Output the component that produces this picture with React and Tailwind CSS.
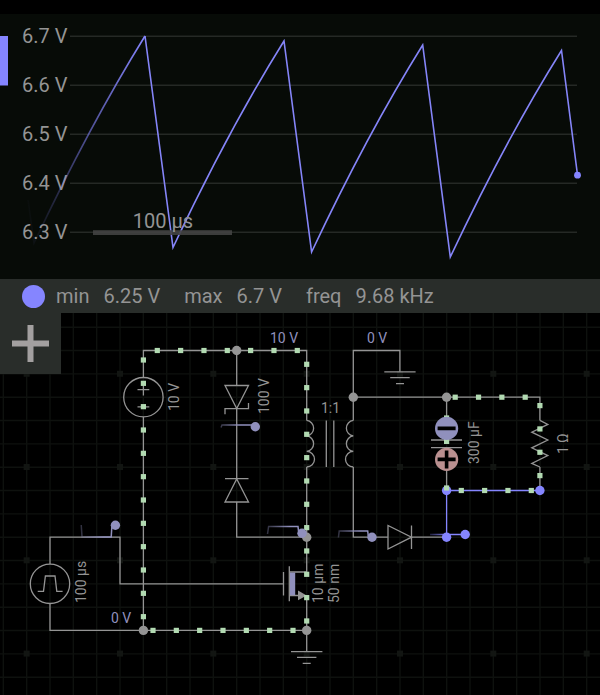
import React from "react";

const GRID = 70 / 3;
const COLS = Array.from({ length: 26 }, (_, i) => 10 / 3 + i * GRID);
const ROWS = Array.from({ length: 16 }, (_, i) => 327.2 + i * GRID);
const MARK_X = [80 / 3, 120, 213.3, 306.7, 400, 493.3, 586.7];
const MARK_Y = [373.8, 467, 560.3, 653.6];

const Y_TICKS = [
  { label: "6.7 V", y: 36 },
  { label: "6.6 V", y: 85 },
  { label: "6.5 V", y: 134 },
  { label: "6.4 V", y: 183 },
  { label: "6.3 V", y: 232 },
];

const run = (start, count) => Array.from({ length: count }, (_, i) => start + i * GRID);

const CHARGES = [
  ...run(157.3, 7).map((x) => [x, 350.5]),
  ...run(360, 12).map((y) => [143.4, y]),
  ...run(153, 7).map((x) => [x, 630.4]),
  ...run(364.3, 12).map((y) => [306.7, y]),
  ...run(455.2, 4).map((x) => [x, 397.2]),
  ...run(405.6, 4).map((y) => [539.9, y]),
  ...run(461.3, 4).map((x) => [x, 490.5]),
  [446.6, 418],
  [446.6, 441.4],
  [446.6, 488],
];

const NODES = [
  [236.7, 350.5],
  [353.3, 397.2],
  [446.6, 397.2],
  [306.7, 537.2],
  [143.4, 630.4],
  [306.7, 630.4],
];

const STATS = [
  { name: "min", value: "6.25 V" },
  { name: "max", value: "6.7 V" },
  { name: "freq", value: "9.68 kHz" },
];

function Scope() {
  return (
    <svg viewBox="0 14 600 265" className="block h-auto w-full bg-[#070b07]" role="img" aria-label="Voltage over time">
      <defs>
        <linearGradient id="fade" gradientUnits="userSpaceOnUse" x1="28" y1="0" x2="145" y2="0">
          <stop offset="0" stopColor="#8585ff" stopOpacity="0.02" />
          <stop offset="0.1" stopColor="#8585ff" stopOpacity="0.08" />
          <stop offset="0.5" stopColor="#8585ff" stopOpacity="0.55" />
          <stop offset="1" stopColor="#8585ff" />
        </linearGradient>
      </defs>
      <rect x="0" y="36" width="8" height="49.5" fill="#8585ff" />
      {Y_TICKS.map((t) => (
        <g key={t.label}>
          <line x1="70" x2="577" y1={t.y + 0.3} y2={t.y + 0.3} stroke="#252925" strokeWidth="1.4" />
          <text x="22" y={t.y + 7} fontSize="20" fill="#949494">{t.label}</text>
        </g>
      ))}
      <g fill="none" strokeWidth="1.6" strokeLinejoin="miter">
        <path d="M28 200 L34 243 Q89.5 125.5 145 36" stroke="url(#fade)" />
        <path
          d="M145 36 L173 247.5 Q228.5 130 284 41 L311.6 252 Q367 134.5 422.7 45 L450.3 257 Q505.8 139.5 561.5 50.5 L577.5 175"
          stroke="#8585f8"
        />
      </g>
      <rect x="93" y="230.2" width="139" height="4.8" fill="#434343" fillOpacity="0.9" />
      <text x="163" y="228" fontSize="20" textAnchor="middle" fill="#949494">100 µs</text>
      <circle cx="577.5" cy="175.2" r="3.4" fill="#8585ff" />
    </svg>
  );
}

function Label({ x, y, children }) {
  return (
    <text transform={`translate(${x} ${y}) rotate(-90)`} fontSize="14" fill="#949494">
      {children}
    </text>
  );
}

function Schematic() {
  return (
    <svg viewBox="0 313 600 382" className="block h-auto w-full bg-black" role="img" aria-label="Flyback converter circuit">
      <defs>
        <linearGradient id="probeA" gradientUnits="userSpaceOnUse" x1="220" y1="0" x2="240" y2="0">
          <stop offset="0" stopColor="#9090bd" stopOpacity="0.35" />
          <stop offset="1" stopColor="#9090bd" />
        </linearGradient>
        <linearGradient id="probeB" gradientUnits="userSpaceOnUse" x1="266" y1="0" x2="290" y2="0">
          <stop offset="0" stopColor="#9090bd" stopOpacity="0.3" />
          <stop offset="1" stopColor="#9090bd" />
        </linearGradient>
        <linearGradient id="probeC" gradientUnits="userSpaceOnUse" x1="337" y1="0" x2="360" y2="0">
          <stop offset="0" stopColor="#9090bd" stopOpacity="0.3" />
          <stop offset="1" stopColor="#9090bd" />
        </linearGradient>
        <linearGradient id="probeD" gradientUnits="userSpaceOnUse" x1="80" y1="0" x2="104" y2="0">
          <stop offset="0" stopColor="#9090bd" stopOpacity="0.3" />
          <stop offset="1" stopColor="#9090bd" />
        </linearGradient>
        <linearGradient id="probeE" gradientUnits="userSpaceOnUse" x1="429" y1="0" x2="448" y2="0">
          <stop offset="0" stopColor="#8585ff" stopOpacity="0.2" />
          <stop offset="1" stopColor="#8585ff" />
        </linearGradient>
      </defs>

      {/* background grid */}
      <g stroke="#0e110e" strokeWidth="1.4">
        {COLS.map((x) => (
          <line key={x} x1={x} x2={x} y1="313" y2="695" />
        ))}
        {ROWS.map((y) => (
          <line key={y} x1="0" x2="600" y1={y} y2={y} />
        ))}
      </g>
      <g fill="#121512">
        {MARK_Y.map((y) => MARK_X.map((x) => <rect key={`${x}-${y}`} x={x - 3} y={y - 3} width="6" height="6" />))}
      </g>

      {/* wires and component outlines */}
      <g fill="none" stroke="#949494" strokeWidth="1.3">
        <path d="M143.4 377.5 V350.5 H306.7 V420.4" />
        <path d="M143.4 417 V630.4" />
        <path d="M50 603.5 V630.4 H306.7" />
        <path d="M50 564 V537.2 H120 V583.8 H283.5" />
        <path d="M236.7 350.5 V385.5 M236.7 408.8 V479 M236.7 502 V537.2 H306.7" />
        <path d="M306.7 467 V572 H289.3 M289.3 595.5 H300 M306.7 595.5 V651.6" />
        <path d="M353.3 420.4 V350.5 H399.9 V371.8" />
        <path d="M353.3 397.2 H539.9 V420.4 M539.9 467 V490.5" />
        <path d="M353.3 467 V537.2 H388 M411.5 537.2 H446.6" />
        <path d="M446.6 397.2 V440 M446.6 447.6 V490.5" />

        <circle cx="143.4" cy="397.2" r="19.7" />
        <path d="M137.5 389.6 H149.3 M143.4 383.5 V395.5 M137.5 406.8 H149.3" />
        <circle cx="50" cy="583.8" r="19.7" />
        <path d="M37.7 591.4 H43.5 L45.4 576 H55 L56.8 591.4 H62.6" />

        <path d="M225 385.5 H248.5 L236.7 408.6 Z M225 414.2 V408.7 H248.5 V403" />
        <path d="M225 502 H248.5 L236.7 479 Z M225 478.7 H248.5" />
        <path d="M388 525.5 V549 L411.5 537.2 Z M411.5 525.5 V549" />

        <path d="M306.7 420.4 a7.8 7.8 0 0 1 0 15.5 a7.8 7.8 0 0 1 0 15.5 a7.8 7.8 0 0 1 0 15.6" />
        <path d="M353.3 420.4 a7.8 7.8 0 0 0 0 15.5 a7.8 7.8 0 0 0 0 15.5 a7.8 7.8 0 0 0 0 15.6" />
        <path d="M326.3 420.4 V467 M333.8 420.4 V467" />

        <path d="M539.9 420.4 L547.8 424.4 L531.8 432.2 L547.8 440 L531.8 447.8 L547.8 455.6 L531.8 463.4 L539.9 467" />
        <path d="M431 440 H462 M431 447.6 H462" />

        <path d="M384.3 371.8 H415.6 M390.2 377.6 H409.7 M396 383.6 H404" />
        <path d="M291 651.6 H322.4 M297 657.4 H316.4 M302.7 663.4 H310.7" />
        <path d="M283.5 572 V595.5 M289.3 566.3 V601.2" />
      </g>
      <rect x="290" y="572.6" width="5.2" height="22.6" fill="#9090bd" />
      <path d="M298 590.5 V600.3 L306.7 595.5 Z" fill="#949494" />

      {/* selected net */}
      <path d="M446.6 537.2 V490.5 H539.9" fill="none" stroke="#8585ff" strokeWidth="1.3" />

      <g fill="#949494">
        {NODES.map(([x, y]) => (
          <circle key={`${x}-${y}`} cx={x} cy={y} r="4.7" />
        ))}
      </g>
      <g fill="#8585ff">
        <circle cx="446.6" cy="490.5" r="4.7" />
        <circle cx="539.9" cy="490.5" r="4.7" />
        <circle cx="446.6" cy="537.2" r="4.7" />
        <circle cx="465.2" cy="534.5" r="4.7" />
      </g>

      {/* moving charges */}
      <g fill="#b2dab2">
        {CHARGES.map(([x, y]) => (
          <rect key={`${x}-${y}`} x={x - 2.6} y={y - 2.6} width="5.2" height="5.2" />
        ))}
      </g>

      {/* probe traces */}
      <g fill="none" strokeWidth="1.5">
        <path d="M221 427.5 L222 424.9 L253 425" stroke="url(#probeA)" />
        <path d="M267.5 534 L268.6 526.5 H298 L298.5 531" stroke="url(#probeB)" />
        <path d="M338.4 537.5 L339.2 531 H367.7 L368.3 536" stroke="url(#probeC)" />
        <path d="M81.2 525 L82 536.9 H111.2 L111.9 526" stroke="url(#probeD)" />
        <path d="M430 534.4 L465 534.6" stroke="url(#probeE)" />
      </g>
      <g fill="#9090bd">
        <circle cx="255.3" cy="426.8" r="4.7" />
        <circle cx="302" cy="533.3" r="4.7" />
        <circle cx="372" cy="537.2" r="4.7" />
        <circle cx="115.4" cy="525.3" r="4.7" />
        <circle cx="446.6" cy="428.4" r="11.6" />
      </g>
      <circle cx="446.6" cy="459.4" r="11.6" fill="#ba9090" />
      <path d="M437.6 428.4 H455.6 M437.6 459.4 H455.6 M446.6 450.4 V468.4" stroke="#000" strokeWidth="3.6" />

      <g fontSize="14" fill="#9090bd">
        <text x="270" y="343">10 V</text>
        <text x="367" y="343">0 V</text>
        <text x="111" y="623">0 V</text>
      </g>
      <text x="321" y="413" fontSize="14" fill="#949494">1:1</text>
      <Label x={179} y={411}>10 V</Label>
      <Label x={269} y={414}>100 V</Label>
      <Label x={86} y={603}>100 µs</Label>
      <Label x={323} y={603}>10 µm</Label>
      <Label x={339} y={603}>50 nm</Label>
      <Label x={479} y={464}>300 µF</Label>
      <Label x={568} y={454}>1 Ω</Label>
    </svg>
  );
}

export default function App() {
  return (
    <main className="min-h-screen overflow-hidden bg-black pt-3.5 font-['Roboto',sans-serif] text-[#949494]">
      <Scope />
      <section className="flex h-[34px] items-center bg-[#292d2a] pl-[22px] text-xl">
        <span className="mr-[11px] size-[23px] shrink-0 rounded-full bg-[#8585ff]" />
        <dl className="flex gap-6 whitespace-nowrap">
          {STATS.map((s) => (
            <div key={s.name} className="flex gap-3.5">
              <dt>{s.name}</dt>
              <dd>{s.value}</dd>
            </div>
          ))}
        </dl>
      </section>
      <section className="relative">
        <Schematic />
        <button type="button" aria-label="Add component" className="absolute top-0 left-0 flex size-[61px] items-center justify-center bg-[#292d2a]">
          <svg viewBox="0 0 37 37" className="size-[37px]" aria-hidden="true">
            <path d="M0 18.5 H37 M18.5 0 V37" stroke="#a3a0a0" strokeWidth="6" />
          </svg>
        </button>
      </section>
    </main>
  );
}
